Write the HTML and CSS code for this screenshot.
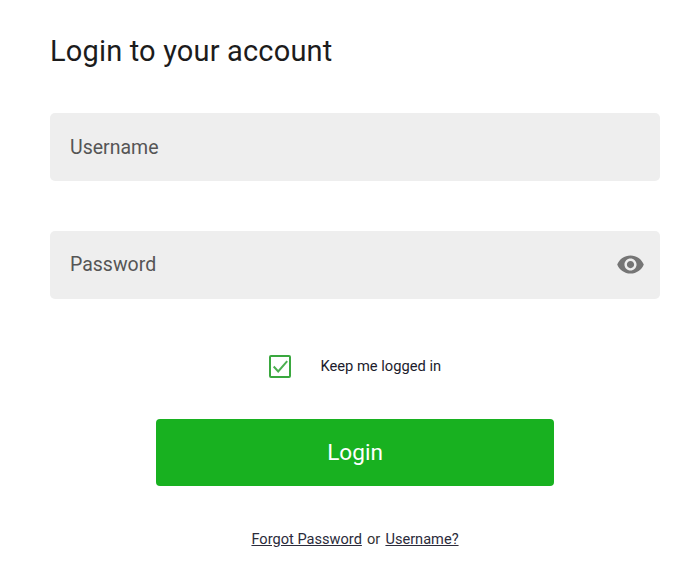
FILE: index.html
```html
<!DOCTYPE html>
<html lang="en">
<head>
<meta charset="utf-8">
<title>Login</title>
<link rel="stylesheet" href="styles.css">
</head>
<body>
<main class="page">
  <h1 class="title">Login to your account</h1>
  <div class="field field-user"><span class="placeholder">Username</span></div>
  <div class="field field-pass">
    <span class="placeholder">Password</span>
    <svg class="eye" viewBox="0 0 24 24" width="29" height="29" aria-hidden="true"><path fill="#757575" d="M12 4.5C7 4.5 2.73 7.61 1 12c1.73 4.39 6 7.5 11 7.5s9.27-3.11 11-7.5c-1.73-4.39-6-7.5-11-7.5zM12 17c-2.76 0-5-2.24-5-5s2.24-5 5-5 5 2.24 5 5-2.24 5-5 5zm0-8c-1.66 0-3 1.34-3 3s1.34 3 3 3 3-1.34 3-3-1.34-3-3-3z"/></svg>
  </div>
  <div class="keep">
    <span class="check"><svg viewBox="0 0 20 20" width="18" height="19" aria-hidden="true"><path fill="none" stroke="#4caf50" stroke-width="2.2" d="M3 10l5 5.5L18 4"/></svg></span>
    <span class="keep-label">Keep me logged in</span>
  </div>
  <button class="login" type="button">Login</button>
  <p class="links"><a href="#">Forgot Password</a> <span class="or">or</span> <a href="#">Username?</a></p>
</main>
</body>
</html>
```

FILE: styles.css
```css
html, body { margin: 0; padding: 0; background: #fff; }
body { font-family: Roboto, "Liberation Sans", sans-serif; }
.page { width: 700px; height: 564px; padding: 34px 40px 0 50px; box-sizing: border-box; overflow: hidden; }
.title { margin: 0; font-size: 29px; line-height: 34px; font-weight: 400; color: #1c1c1c; letter-spacing: 0.17px; }
.field { height: 68px; background: #eeeeee; border-radius: 5px; display: flex; align-items: center; justify-content: space-between; padding: 0 15px 0 20px; }
.field-user { margin-top: 45px; }
.field-pass { margin-top: 49.5px; }
.placeholder { font-size: 19.5px; color: #555; }
.eye { display: block; }
.keep { display: flex; align-items: center; justify-content: center; margin-top: 55.5px; height: 24px; }
.check { width: 18px; height: 19px; border: 2px solid #3aa83f; border-radius: 2px; display: block; }
.check svg { display: block; }
.keep-label { margin-left: 29.5px; font-size: 14.7px; color: #1c1c2c; }
.login { display: block; margin: 41px 0 0 106px; width: 398px; height: 67px; border: 0; border-radius: 4px; background: #18b120; color: #fff; font-family: inherit; font-size: 22.6px; font-weight: 400; }
.links { margin: 43px 0 0 0; text-align: center; font-size: 14.6px; line-height: 20px; color: #333; }
.links a { color: #2b2b3b; text-decoration: underline; }
.or { margin: 0 1.5px; }
```
